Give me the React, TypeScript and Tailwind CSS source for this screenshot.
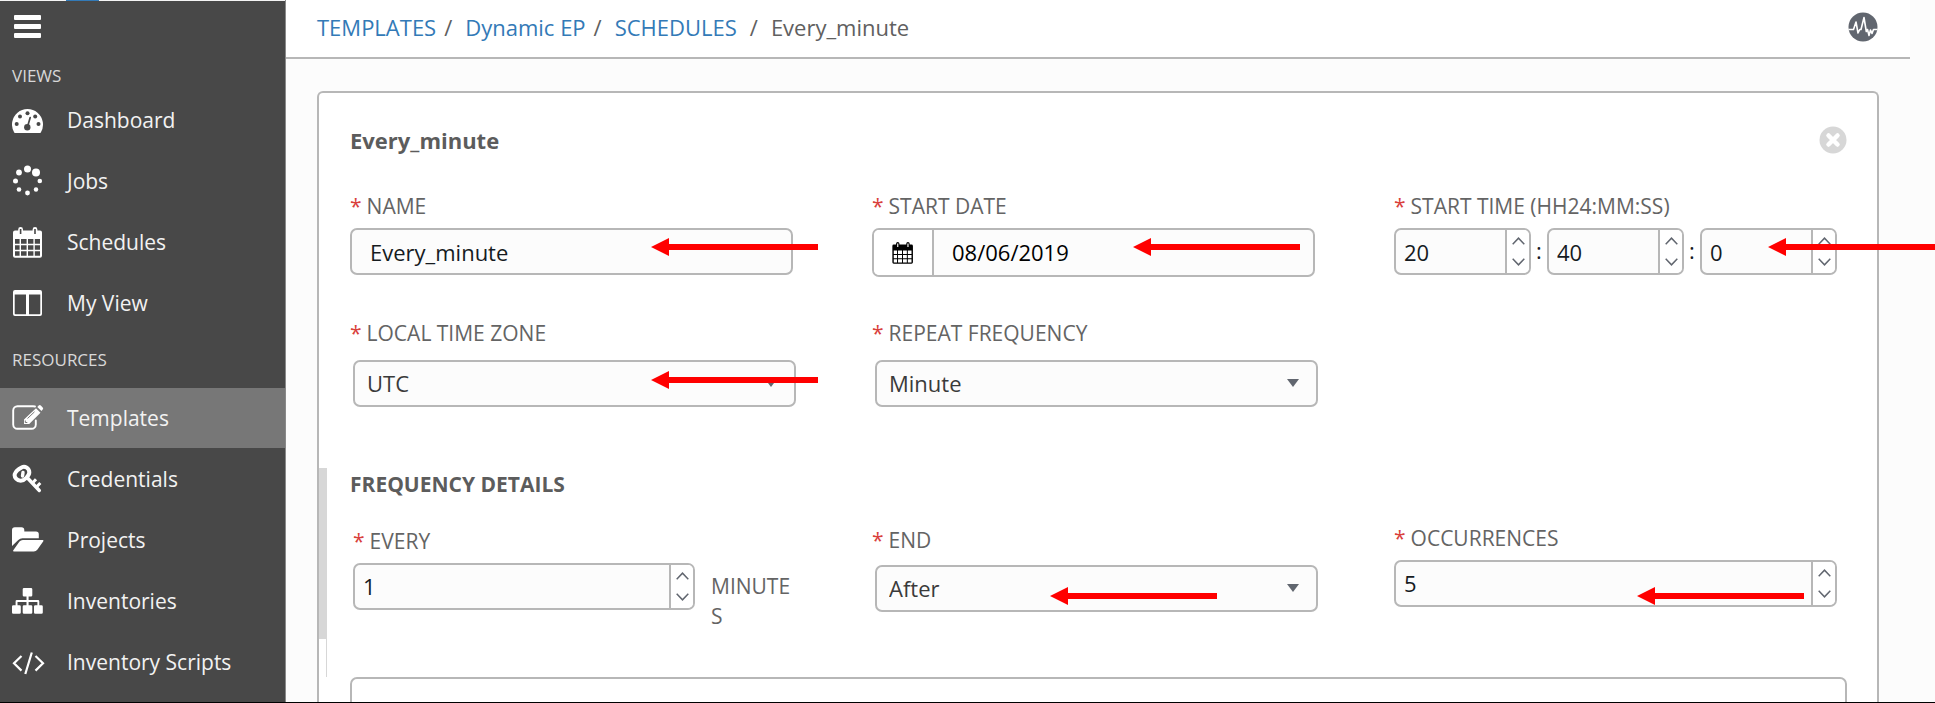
import React, { useState } from "react";

type IconProps = { className?: string };

const CalendarGlyph = ({ className }: IconProps) => (
  <svg viewBox="0 0 30 31" className={className} aria-hidden="true">
    <path
      fill="currentColor"
      fillRule="evenodd"
      d="M5.2 3.5V2.4A2.4 2.4 0 0 1 7.6 0a2.4 2.4 0 0 1 2.4 2.4v1.1h9.600V2.400A2.400 2.400 0 0 1 22 0a2.400 2.400 0 0 1 2.400 2.400v1.100H27a2 2 0 0 1 2 2V28.700a2 2 0 0 1-2 2H2a2 2 0 0 1-2-2V5.500a2 2 0 0 1 2-2zM6.800 2v5h1.600V2zm14.400 0v5h1.600V2zM2 12v4.800h4.600V12zm6 0v4.800h5.600V12zm7 0v4.800h5.400V12zm6.800 0v4.800H27V12zM2 18.200v4.600h4.600v-4.600zm6 0v4.600h5.600v-4.600zm7 0v4.600h5.400v-4.600zm6.800 0v4.600H27v-4.600zM2 24.200v4.600h4.600v-4.600zm6 0v4.600h5.600v-4.600zm7 0v4.600h5.400v-4.600zm6.800 0v4.600H27v-4.600z"
    />
  </svg>
);

const icons: Record<string, React.ReactNode> = {
  dashboard: (
    <>
      <path
        fill="currentColor"
        d="M2.200 28.500A15.500 15.500 0 1 1 28.800 28.500Q28.300 29 27.500 29H3.500Q2.700 29 2.200 28.500Z"
      />
      <g fill="#484848">
        <circle cx="4.700" cy="20" r="2" />
        <circle cx="8" cy="12.500" r="2" />
        <circle cx="15.500" cy="9.200" r="2" />
        <circle cx="23.200" cy="12.500" r="2" />
        <circle cx="26.500" cy="20" r="2" />
        <circle cx="15.300" cy="23.300" r="3.200" />
      </g>
      <path d="M15.600 22.500 18.200 13.500" stroke="#484848" strokeWidth="1.700" strokeLinecap="round" />
    </>
  ),
  jobs: (
    <g fill="currentColor">
      <circle cx="15.500" cy="4" r="3.500" />
      <circle cx="24" cy="7.500" r="4" />
      <circle cx="7" cy="7.500" r="2.900" />
      <circle cx="3.500" cy="16" r="2.500" />
      <circle cx="27.800" cy="16" r="2.300" />
      <circle cx="7" cy="24.500" r="2.300" />
      <circle cx="15.500" cy="28" r="2.400" />
      <circle cx="24" cy="24.500" r="2.200" />
    </g>
  ),
  columns: (
    <path
      fill="currentColor"
      fillRule="evenodd"
      d="M3 3H28a2 2 0 0 1 2 2V27a2 2 0 0 1-2 2H3a2 2 0 0 1-2-2V5a2 2 0 0 1 2-2zM2.700 7.500V26.500q0 .8.8.8H14V7.500zM17 7.500V27.300H27.500q.8 0 .8-.8V7.500z"
    />
  ),
  edit: (
    <>
      <path
        d="M23 4.500Q22 4.200 21 4.200H5.500A4.300 4.300 0 0 0 1.200 8.500V22.500A4.300 4.300 0 0 0 5.500 26.800H19.500A4.300 4.300 0 0 0 23.800 22.500V18.500"
        fill="none"
        stroke="currentColor"
        strokeWidth="1.900"
        strokeLinecap="round"
      />
      <path fill="currentColor" d="M24 6.200 28.500 10.700 17.200 22H12V17.500zM25.300 5 26.700 3.600a1.500 1.500 0 0 1 2.100 0l1.900 1.900a1.500 1.500 0 0 1 0 2.100L29.500 9z" />
      <path d="M15.500 16.500 22.500 9.800M13.300 18.500v2h2" stroke="#777777" strokeWidth="1" fill="none" />
    </>
  ),
  key: (
    <g transform="translate(0 2)">
      <path
        d="M10 2.200c3-1.600 7.200 1.200 7.300 5 .1 2.500-1.200 3.800-3 5.600-2 2-3.200 3-5.600 3-3.600 0-6.800-3.300-5.900-6.800C3.600 6.200 7.500 3.500 10 2.200z"
        fill="none"
        stroke="currentColor"
        strokeWidth="4"
      />
      <path d="M11 7.500 10.500 11M16 13.500 27.300 25.500" stroke="currentColor" strokeWidth="3.400" fill="none" strokeLinecap="round" />
      <path d="M20.500 18 24 14.200M24.500 22 28.300 18" stroke="currentColor" strokeWidth="3" fill="none" />
    </g>
  ),
  folder: (
    <path
      fill="currentColor"
      d="M0 22V6A2.800 2.800 0 0 1 2.800 3.300H9.500A2.800 2.800 0 0 1 12.300 6V7.400H24A2.800 2.800 0 0 1 26.800 10.200V14.200H10.500Q8 14.200 6.300 16zM1.700 27.500Q.6 27.300 1.300 26.300L7.500 17.600Q8.700 15.900 10.800 15.900H30.800Q32 16 31.300 17.200L25.300 25.700Q24 27.500 21.800 27.500z"
    />
  ),
  sitemap: (
    <path
      fill="currentColor"
      d="M12 3h7a1.300 1.300 0 0 1 1.300 1.300v6A1.300 1.300 0 0 1 19 11.600H16.600V15H26a1.300 1.300 0 0 1 1.300 1.300V20.300H29.500a1.300 1.300 0 0 1 1.300 1.300V27.500a1.300 1.300 0 0 1-1.300 1.300H23.300A1.300 1.300 0 0 1 22 27.500V21.600a1.300 1.300 0 0 1 1.300-1.300H25.400V17H16.600V20.300H19a1.300 1.300 0 0 1 1.300 1.300V27.500A1.300 1.300 0 0 1 19 28.800H12a1.300 1.300 0 0 1-1.300-1.300V21.600A1.300 1.300 0 0 1 12 20.300H14.500V17H5.500V20.300H7.500a1.300 1.300 0 0 1 1.300 1.300V27.500A1.300 1.300 0 0 1 7.500 28.800H1.300A1.300 1.300 0 0 1 0 27.500V21.600a1.300 1.300 0 0 1 1.300-1.300H3.600V16.300A1.300 1.300 0 0 1 4.900 15H14.500V11.600H12a1.300 1.300 0 0 1-1.300-1.300v-6A1.300 1.300 0 0 1 12 3z"
    />
  ),
  code: (
    <path
      d="M9.500 10 2 17.300 9.500 24.600M23.500 10 31 17.300 23.500 24.600M19.800 6.500 13.300 28"
      fill="none"
      stroke="currentColor"
      strokeWidth="2.200"
    />
  ),
};

function NavIcon({ name }: { name: string }) {
  if (name === "calendar") return <CalendarGlyph className="ml-px mr-[2px] h-[31px] w-[30px]" />;
  return (
    <svg viewBox="0 0 33 32" className="h-8 w-[33px]" aria-hidden="true">
      {icons[name]}
    </svg>
  );
}

function NavItem({ icon, label, active }: { icon: string; label: string; active?: boolean }) {
  return (
    <li>
      <a
        href="#"
        aria-current={active ? "page" : undefined}
        className={`flex h-[60px] items-center gap-[22px] pl-3 text-[21px] leading-[30px] text-white ${
          active ? "bg-[#777777]" : ""
        }`}
      >
        <NavIcon name={icon} />
        <span className="text-[#f2f2f2]">{label}</span>
      </a>
    </li>
  );
}

function Arrow({ className }: IconProps) {
  return (
    <svg viewBox="0 0 167 18" className={`pointer-events-none absolute z-10 h-[18px] w-[167px] ${className}`} aria-hidden="true">
      <path fill="#ff0000" d="M0 9 18 0V6H167V12H18V18z" />
    </svg>
  );
}

function Label({ htmlFor, children }: { htmlFor: string; children: React.ReactNode }) {
  return (
    <label htmlFor={htmlFor} className="block text-[21px] leading-[30px] text-[#646464]">
      <span className="mr-[5px] text-[#d9403c]">*</span>
      {children}
    </label>
  );
}

function Spinner({ id, initial, name }: { id: string; initial: number; name: string }) {
  const [value, setValue] = useState(initial);
  return (
    <div className="flex h-[47px] min-w-0 flex-1 overflow-hidden rounded-[7px] border-2 border-[#b7b7b7] bg-[#fcfcfc]">
      <input
        id={id}
        aria-label={name}
        value={value}
        onChange={(e) => setValue(Number(e.target.value) || 0)}
        className="w-0 flex-1 bg-transparent px-[8px] text-[22px] text-[#161b1f] outline-none"
      />
      <div className="flex w-6 flex-col border-l-2 border-[#b7b7b7] bg-white text-[#61666f]">
        <button type="button" aria-label="Increase" onClick={() => setValue(value + 1)} className="flex flex-1 items-center justify-center">
          <svg viewBox="0 0 13 8" className="h-2 w-[13px]">
            <path d="M.7 7.300 6.500 1.200 12.300 7.300" fill="none" stroke="currentColor" strokeWidth="1.500" />
          </svg>
        </button>
        <button type="button" aria-label="Decrease" onClick={() => setValue(Math.max(0, value - 1))} className="flex flex-1 items-center justify-center">
          <svg viewBox="0 0 13 8" className="h-2 w-[13px]">
            <path d="M.7.7 6.500 6.800 12.300.7" fill="none" stroke="currentColor" strokeWidth="1.500" />
          </svg>
        </button>
      </div>
    </div>
  );
}

function Select({ id, options, compact }: { id: string; options: string[]; compact?: boolean }) {
  return (
    <div className={`relative -mr-[3px] ml-[3px] ${compact ? "mt-[10px]" : "mt-3"}`}>
      <select
        id={id}
        className="block h-[47px] w-full appearance-none rounded-[7px] border-2 border-[#b7b7b7] bg-[#fcfcfc] pl-3 pr-10 text-[22px] text-[#3a3a3a] outline-none"
      >
        {options.map((o) => (
          <option key={o}>{o}</option>
        ))}
      </select>
      <svg viewBox="0 0 12 8" className="pointer-events-none absolute right-[19px] top-[19px] h-2 w-3" aria-hidden="true">
        <path fill="#61666f" d="M0 0H12L6 8z" />
      </svg>
    </div>
  );
}

function Sidebar() {
  return (
    <nav className="w-[286px] shrink-0 border-r border-[#8a8a8a] bg-[#484848]">
      <div className="flex h-px bg-[#f4f4f4]" aria-hidden="true">
        <span className="ml-[66px] w-[33px] bg-[#337ab7]" />
      </div>
      <button type="button" aria-label="Toggle menu" className="ml-[14px] mt-[14px] flex h-[23px] w-[27px] flex-col justify-between">
        <span className="h-[5px] w-full rounded-[1px] bg-white" />
        <span className="h-[5px] w-full rounded-[1px] bg-white" />
        <span className="h-[5px] w-full rounded-[1px] bg-white" />
      </button>
      <h2 className="mt-[25px] pl-3 text-[17px] leading-[26px] text-[#d8d8d8]">VIEWS</h2>
      <ul className="mt-px flex flex-col gap-px">
        <NavItem icon="dashboard" label="Dashboard" />
        <NavItem icon="jobs" label="Jobs" />
        <NavItem icon="calendar" label="Schedules" />
        <NavItem icon="columns" label="My View" />
      </ul>
      <h2 className="mt-[14px] pl-3 text-[17px] leading-[26px] text-[#d8d8d8]">RESOURCES</h2>
      <ul className="mt-[15px] flex flex-col gap-px">
        <NavItem icon="edit" label="Templates" active />
        <NavItem icon="key" label="Credentials" />
        <NavItem icon="folder" label="Projects" />
        <NavItem icon="sitemap" label="Inventories" />
        <NavItem icon="code" label="Inventory Scripts" />
      </ul>
    </nav>
  );
}

function Breadcrumb() {
  return (
    <header className="mr-[25px] flex h-[59px] shrink-0 items-center justify-between border-b-2 border-[#b7b7b7] bg-white pb-[3px] pl-[31px] pr-8">
      <ol className="flex text-[22px] leading-[30px] text-[#606060]">
        <li>
          <a href="#" className="text-[#337ab7]">TEMPLATES</a>
          <span className="ml-2 mr-[13px]">/</span>
        </li>
        <li>
          <a href="#" className="text-[#337ab7]">Dynamic EP</a>
          <span className="ml-2 mr-[13px]">/</span>
        </li>
        <li>
          <a href="#" className="text-[#337ab7]">SCHEDULES</a>
          <span className="ml-[13px] mr-[13px]">/</span>
        </li>
        <li aria-current="page">Every_minute</li>
      </ol>
      <button type="button" aria-label="Activity stream">
        <svg viewBox="0 0 30 30" className="size-[30px]">
          <circle cx="15" cy="15" r="14.500" fill="#61666f" />
          <path
            d="M.5 17.500H5.500L8 10 10 21 11.800 17.500H13L16 5.500 18.300 19.500 19.500 17.500 21 23.500 22.500 18 24 21.500 25.500 17.500H29.500"
            fill="none"
            stroke="#fff"
            strokeWidth="1.600"
            strokeLinejoin="round"
          />
        </svg>
      </button>
    </header>
  );
}

export default function App() {
  return (
    <div className="flex h-screen overflow-hidden border-b border-black bg-[#fcfcfc] font-['Open_Sans',sans-serif] font-normal">
      <Sidebar />
      <div className="flex min-w-0 flex-1 flex-col">
        <Breadcrumb />
        <main className="ml-[31px] mr-14 mt-8 flex-1 rounded-t-[6px] border-2 border-b-0 border-[#b7b7b7] bg-white">
          <div className="mt-8 flex h-[30px] items-center justify-between pl-[31px] pr-[30px]">
            <h1 className="text-[22px] font-bold leading-[30px] text-[#5c5c5c]">Every_minute</h1>
            <button type="button" aria-label="Close">
              <svg viewBox="0 0 28 28" className="size-7">
                <circle cx="14" cy="14" r="13.500" fill="#d7d7d7" />
                <path d="M9.500 9.500 18.500 18.500M18.500 9.500 9.500 18.500" stroke="#fff" strokeWidth="4.500" strokeLinecap="round" />
              </svg>
            </button>
          </div>

          <form>
            <div className="mt-9 grid grid-cols-3 gap-x-[79px] pl-[31px] pr-10">
              <div className="relative">
                <Label htmlFor="name">NAME</Label>
                <input
                  id="name"
                  defaultValue="Every_minute"
                  className="mt-[7px] block h-[47px] w-full rounded-[7px] border-2 border-[#b7b7b7] bg-[#fcfcfc] px-[18px] text-[22px] text-[#161b1f] outline-none"
                />
                <Arrow className="left-[301px] top-[47px]" />
              </div>
              <div className="relative">
                <Label htmlFor="date">START DATE</Label>
                <div className="mt-[7px] flex h-[49px] overflow-hidden rounded-[7px] border-2 border-[#b7b7b7] bg-[#fcfcfc]">
                  <button type="button" aria-label="Open calendar" className="flex w-[60px] items-center justify-center border-r-2 border-[#b7b7b7] bg-white text-black">
                    <CalendarGlyph className="h-[22px] w-[22px]" />
                  </button>
                  <input
                    id="date"
                    defaultValue="08/06/2019"
                    className="w-0 flex-1 bg-transparent px-[18px] text-[22px] text-black outline-none"
                  />
                </div>
                <Arrow className="left-[261px] top-[47px]" />
              </div>
              <div className="relative">
                <Label htmlFor="hours">START TIME (HH24:MM:SS)</Label>
                <div className="mt-[7px] flex text-[22px] leading-[44px] text-[#161b1f]">
                  <Spinner id="hours" name="Hours" initial={20} />
                  <span className="w-4 text-center">:</span>
                  <Spinner id="minutes" name="Minutes" initial={40} />
                  <span className="w-4 text-center">:</span>
                  <Spinner id="seconds" name="Seconds" initial={0} />
                </div>
                <Arrow className="left-[374px] top-[47px]" />
              </div>
            </div>

            <div className="mt-[41px] grid grid-cols-3 gap-x-[79px] pl-[31px] pr-10">
              <div className="relative">
                <Label htmlFor="zone">LOCAL TIME ZONE</Label>
                <Select id="zone" options={["UTC"]} />
                <Arrow className="left-[301px] top-[53px]" />
              </div>
              <div>
                <Label htmlFor="repeat">REPEAT FREQUENCY</Label>
                <Select id="repeat" options={["Minute", "Hour", "Day", "Week"]} />
              </div>
            </div>

            <section className="mt-[61px] flex">
              <div className="w-2 shrink-0 border-r border-[#d7d7d7]" aria-hidden="true">
                <div className="h-[171px] bg-[#d7d7d7]" />
              </div>
              <div className="flex-1 pb-[46px] pl-[23px] pr-10 pt-px">
                <h2 className="text-[21px] font-bold leading-[30px] text-[#5c5c5c]">FREQUENCY DETAILS</h2>
                <div className="mt-6 grid grid-cols-3 gap-x-[79px]">
                  <div className="pl-[3px] pt-[3px]">
                    <Label htmlFor="every">EVERY</Label>
                    <div className="-mr-[3px] mt-[7px] flex items-start">
                      <Spinner id="every" name="Every" initial={1} />
                      <span className="ml-4 mt-2 w-[85px] break-all text-[21px] leading-[30px] text-[#646464]">MINUTES</span>
                    </div>
                  </div>
                  <div className="relative pt-[2px]">
                    <Label htmlFor="end">END</Label>
                    <Select id="end" options={["After", "Never", "On Date"]} compact />
                    <Arrow className="left-[178px] top-16" />
                  </div>
                  <div className="relative">
                    <Label htmlFor="occurrences">OCCURRENCES</Label>
                    <div className="mt-[7px] flex">
                      <Spinner id="occurrences" name="Occurrences" initial={5} />
                    </div>
                    <Arrow className="left-[243px] top-16" />
                  </div>
                </div>
              </div>
            </section>

            <div className="ml-[31px] mr-[30px] h-40 rounded-[7px] border-2 border-[#b7b7b7] bg-white" />
          </form>
        </main>
      </div>
    </div>
  );
}
